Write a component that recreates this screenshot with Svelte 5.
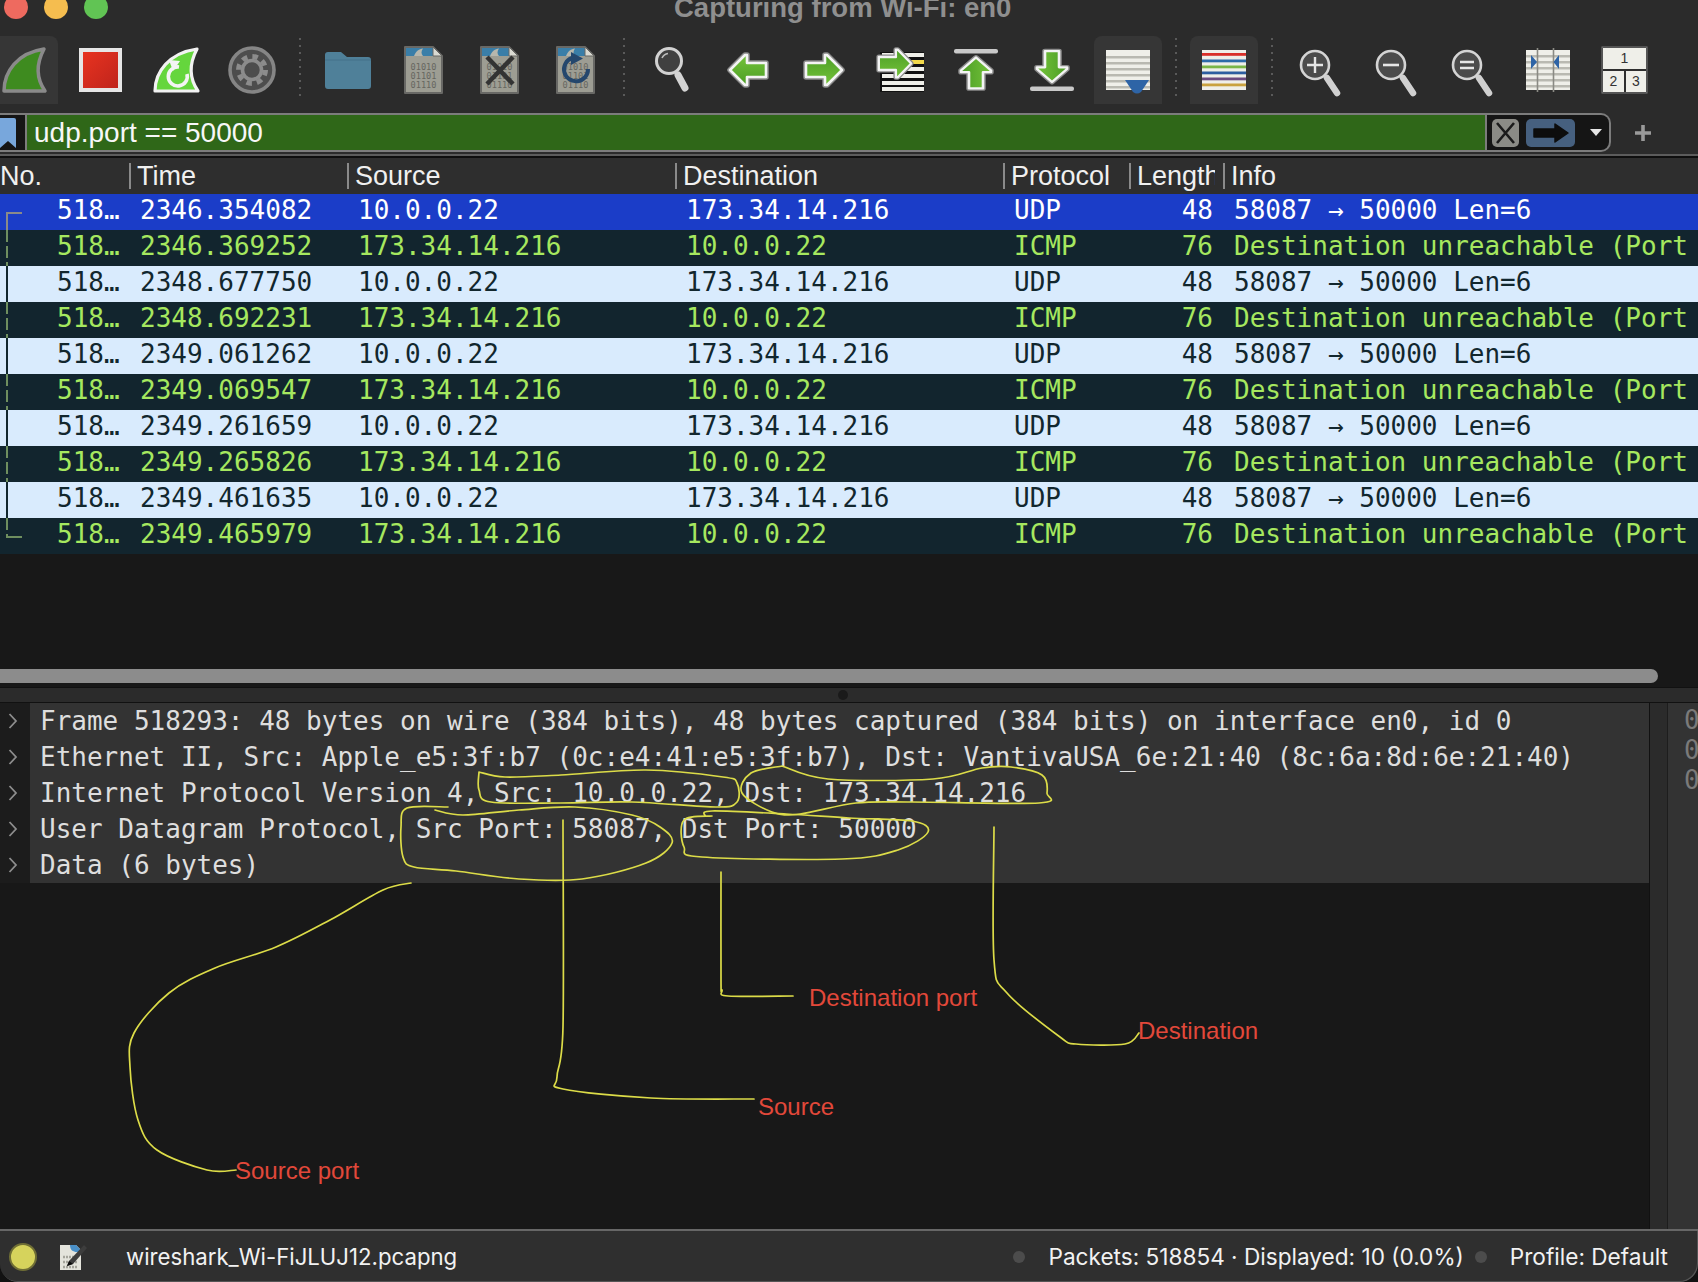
<script>
  const columns = ['No.', 'Time', 'Source', 'Destination', 'Protocol', 'Length', 'Info'];

  const times = ['2346.354082', '2346.369252', '2348.677750', '2348.692231', '2349.061262', '2349.069547', '2349.261659', '2349.265826', '2349.461635', '2349.465979'];

  const packets = times.map((time, i) => {
    const reply = i % 2 === 1;
    return {
      time,
      source: reply ? '173.34.14.216' : '10.0.0.22',
      destination: reply ? '10.0.0.22' : '173.34.14.216',
      protocol: reply ? 'ICMP' : 'UDP',
      length: reply ? 76 : 48,
      info: reply ? 'Destination unreachable (Port unreachable)' : '58087 → 50000 Len=6',
      kind: i === 0 ? 'selected' : reply ? 'dark' : 'plain',
      edge: i === 0 ? 'first' : i === times.length - 1 ? 'last' : ''
    };
  });

  const details = [
    'Frame 518293: 48 bytes on wire (384 bits), 48 bytes captured (384 bits) on interface en0, id 0',
    'Ethernet II, Src: Apple_e5:3f:b7 (0c:e4:41:e5:3f:b7), Dst: VantivaUSA_6e:21:40 (8c:6a:8d:6e:21:40)',
    'Internet Protocol Version 4, Src: 10.0.0.22, Dst: 173.34.14.216',
    'User Datagram Protocol, Src Port: 58087, Dst Port: 50000',
    'Data (6 bytes)'
  ];

  // hand-drawn marks, traced from the picture
  const scribbles = [
    [[479,772],[479,790],[491,802],[561,803],[632,802],[716,807],[737,802],[737,783],[723,777],[646,770],[561,775],[505,777],[479,772]],
    [[782,766],[751,773],[742,793],[772,812],[800,814],[856,803],[912,802],[1039,803],[1047,793],[1042,775],[1011,767],[982,768],[933,779],[828,779],[782,766]],
    [[448,807],[407,808],[401,827],[403,857],[414,867],[456,871],[519,879],[582,879],[646,863],[672,843],[660,827],[632,815],[575,807],[519,810],[463,815],[435,810]],
    [[705,816],[712,811],[786,814],[849,818],[912,821],[928,832],[898,850],[842,859],[702,857],[684,847],[684,820],[712,816]],
    [[563,820],[563,1027],[557,1077],[563,1089],[651,1098],[754,1099]],
    [[721,872],[721,980],[722,990],[728,996],[793,996]],
    [[994,827],[994,960],[1007,993],[1060,1037],[1076,1044],[1125,1044],[1139,1033]],
    [[411,883],[383,890],[330,920],[276,947],[215,968],[169,993],[134,1033],[130,1067],[138,1120],[157,1150],[207,1170],[236,1170]]
  ];

  const notes = [
    { text: 'Destination port', x: 809, y: 1006 },
    { text: 'Destination', x: 1138, y: 1039 },
    { text: 'Source', x: 758, y: 1115 },
    { text: 'Source port', x: 235, y: 1179 }
  ];

  function smooth(pts) {
    let d = `M${pts[0][0]} ${pts[0][1]}`;
    for (let i = 0; i < pts.length - 1; i++) {
      const p0 = pts[i - 1] || pts[i];
      const p1 = pts[i];
      const p2 = pts[i + 1];
      const p3 = pts[i + 2] || p2;
      const c1x = p1[0] + (p2[0] - p0[0]) / 6;
      const c1y = p1[1] + (p2[1] - p0[1]) / 6;
      const c2x = p2[0] - (p3[0] - p1[0]) / 6;
      const c2y = p2[1] - (p3[1] - p1[1]) / 6;
      d += `C${c1x} ${c1y} ${c2x} ${c2y} ${p2[0]} ${p2[1]}`;
    }
    return d;
  }
</script>

{#snippet arrow(transform)}
  <g {transform}>
    <path d="M-18 0L-3-15H-1V-7H18V7H-1V15H-3Z" fill="none" stroke="#8b8b8b" stroke-width="5.5" stroke-linejoin="round" />
    <path d="M-18 0L-3-15H-1V-7H18V7H-1V15H-3Z" fill="url(#green)" stroke="#f4f4f4" stroke-width="2.6" stroke-linejoin="round" />
  </g>
{/snippet}

{#snippet lens(sign)}
  <path d="M41 42L51 57" stroke="#d0d0d0" stroke-width="6.5" stroke-linecap="round" />
  <circle cx="29" cy="29" r="14" fill="#4b4b4b" stroke="#d4d4d4" stroke-width="2.6" />
  {#if sign === 'plus'}
    <path d="M21 29H37M29 21V37" stroke="#e6e6e6" stroke-width="2.4" />
  {:else if sign === 'minus'}
    <path d="M21 29H37" stroke="#e6e6e6" stroke-width="2.6" />
  {:else}
    <path d="M22 26H36M22 32H36" stroke="#e6e6e6" stroke-width="2.4" />
  {/if}
{/snippet}

{#snippet capture(extra)}
  <path d="M15 11H43L52 20V57H15Z" fill="#9d9d93" stroke="#686865" stroke-width="2" stroke-linejoin="round" />
  <path d="M16 12H43L47 20H16Z" fill="#3a7ea8" />
  <path d="M24 20C26 15 29 13 33 12.5C31 15 31 18 33 20Z" fill="#b7b7ad" />
  <path d="M43 11L52 20H43Z" fill="#dadad2" stroke="#686865" stroke-width="1" />
  <text class="bits" x="33.5" y="34">01010</text>
  <text class="bits" x="33.5" y="43">01101</text>
  <text class="bits" x="33.5" y="52">01110</text>
  {#if extra === 'close'}
    <path d="M21 21L47 48M47 21L21 48" stroke="#333" stroke-width="4.5" />
  {:else if extra === 'reload'}
    <path d="M46 33A12 12 0 1 1 30 22" fill="none" stroke="#25476d" stroke-width="4" />
    <path d="M29 16L41 22.5L29 29Z" fill="#25476d" />
  {/if}
{/snippet}

<div class="window">
  <svg class="defs" width="0" height="0" aria-hidden="true">
    <defs>
      <linearGradient id="green" x1="0" y1="0" x2="0" y2="1">
        <stop offset="0" stop-color="#74c23a" />
        <stop offset="1" stop-color="#4c9e25" />
      </linearGradient>
      <linearGradient id="red" x1="0" y1="0" x2="1" y2="1">
        <stop offset="0" stop-color="#ea3420" />
        <stop offset="1" stop-color="#bd231c" />
      </linearGradient>
    </defs>
  </svg>

  <header class="titlebar">
    <div class="lamps">
      <span class="lamp red"></span>
      <span class="lamp yellow"></span>
      <span class="lamp green"></span>
    </div>
    <div class="title">Capturing from Wi-Fi: en0</div>
  </header>

  <div class="toolbar">
    <div class="tool on">
      <svg viewBox="0 0 68 68"><path d="M14 55C14 36 27 17 54 13C46 28 46 42 55 55Z" fill="#3e8b1f" stroke="#8a8a8a" stroke-width="3.5" stroke-linejoin="round" /></svg>
    </div>
    <div class="tool">
      <svg viewBox="0 0 68 68"><rect x="15" y="14" width="39" height="40" fill="url(#red)" stroke="#e6e6e6" stroke-width="4" /></svg>
    </div>
    <div class="tool">
      <svg viewBox="0 0 68 68">
        <path d="M13 55C13 36 27 17 55 13C47 28 47 42 56 55Z" fill="#65d63d" stroke="#f2f2f2" stroke-width="3.2" stroke-linejoin="round" />
        <path d="M37 31A9.5 9.5 0 1 0 45 38" fill="none" stroke="#f4f4f4" stroke-width="3.6" />
        <path d="M27 24L38 25L31 35Z" fill="#f4f4f4" />
      </svg>
    </div>
    <div class="tool">
      <svg viewBox="0 0 68 68">
        <circle cx="34" cy="34" r="22" fill="#4d4d4d" stroke="#858585" stroke-width="3.6" />
        <circle cx="34" cy="34" r="13.5" fill="none" stroke="#8c8c8c" stroke-width="5" stroke-dasharray="5.5 5.1" />
        <circle cx="34" cy="34" r="9.5" fill="none" stroke="#8c8c8c" stroke-width="3.6" />
      </svg>
    </div>
    <span class="sep"></span>
    <div class="tool">
      <svg viewBox="0 0 68 68"><path d="M11 19Q11 16 14 16H27L33 21H54Q57 21 57 24V50Q57 53 54 53H14Q11 53 11 50Z" fill="#4f8099" /><path d="M11 24H57" stroke="#44718a" stroke-width="1" /></svg>
    </div>
    <div class="tool"><svg viewBox="0 0 68 68">{@render capture('')}</svg></div>
    <div class="tool"><svg viewBox="0 0 68 68">{@render capture('close')}</svg></div>
    <div class="tool"><svg viewBox="0 0 68 68">{@render capture('reload')}</svg></div>
    <span class="sep"></span>
    <div class="tool">
      <svg viewBox="0 0 68 68">
        <path d="M40 39L47 52" stroke="#d4d4d4" stroke-width="7" stroke-linecap="round" />
        <circle cx="31" cy="25" r="12.5" fill="#404040" stroke="#d2d2d2" stroke-width="3" />
        <path d="M24 22Q26 18 30 17.5" fill="none" stroke="#bdbdbd" stroke-width="1.6" />
      </svg>
    </div>
    <div class="tool"><svg viewBox="0 0 68 68">{@render arrow('translate(34 34)')}</svg></div>
    <div class="tool"><svg viewBox="0 0 68 68">{@render arrow('translate(34 34) rotate(180)')}</svg></div>
    <div class="tool">
      <svg viewBox="0 0 68 68">
        <rect x="14" y="16" width="44" height="40" fill="#111" />
        {#each [17, 24, 31, 38, 45, 51] as y}
          <rect x="16" {y} width="42" height="4" fill={y === 24 ? '#f2d94a' : '#efefe9'} />
        {/each}
        {@render arrow('translate(29 27.5) rotate(180) scale(.9 .92)')}
      </svg>
    </div>
    <div class="tool">
      <svg viewBox="0 0 68 68">
        <rect x="12" y="13" width="44" height="4.5" rx="2" fill="#c9c9c9" />
        {@render arrow('translate(34 37) rotate(90) scale(.86 1)')}
      </svg>
    </div>
    <div class="tool">
      <svg viewBox="0 0 68 68">
        {@render arrow('translate(34 30.5) rotate(-90) scale(.86 1)')}
        <rect x="12" y="50.5" width="44" height="4.5" rx="2" fill="#c9c9c9" />
      </svg>
    </div>
    <div class="tool on">
      <svg viewBox="0 0 68 68">
        <rect x="12" y="14" width="44" height="40" fill="#efefe9" />
        {#each [20, 26, 32, 38, 44, 50] as y}
          <rect x="12" {y} width="44" height="2.5" fill="#b9b9b1" />
        {/each}
        <path d="M31 44H55L47 56Q43 59 39 56Z" fill="#2e64a6" />
      </svg>
    </div>
    <span class="sep"></span>
    <div class="tool on">
      <svg viewBox="0 0 68 68">
        <rect x="12" y="14" width="44" height="40" fill="#efefe9" />
        {#each [['#d9302a', 17], ['#2d6ba8', 23.5], ['#7ab648', 29.5], ['#2d5ea0', 35.5], ['#6b4a80', 41.5], ['#c9a23f', 47.5]] as [c, y]}
          <rect x="12" {y} width="44" height="2.8" fill={c} />
        {/each}
      </svg>
    </div>
    <span class="sep"></span>
    <div class="tool"><svg viewBox="0 0 68 68">{@render lens('plus')}</svg></div>
    <div class="tool"><svg viewBox="0 0 68 68">{@render lens('minus')}</svg></div>
    <div class="tool"><svg viewBox="0 0 68 68">{@render lens('equal')}</svg></div>
    <div class="tool">
      <svg viewBox="0 0 68 68">
        <rect x="12" y="14" width="44" height="40" fill="#efefe9" />
        {#each [19, 25, 31, 37, 43, 49] as y}
          <rect x="12" {y} width="44" height="2.5" fill="#b9b9b1" />
        {/each}
        <path d="M23.5 12V56M39.5 12V56" stroke="#8a8a84" stroke-width="1.6" />
        <path d="M17 19L23 26L17 33ZM45 19L39.5 26L45 33Z" fill="#2e64a6" />
      </svg>
    </div>
    <div class="tool">
      <svg viewBox="0 0 68 68">
        <rect x="12" y="11" width="45" height="46" fill="#2f2f2f" stroke="#7c7c7c" stroke-width="1" />
        <rect x="13" y="12" width="43" height="21" fill="#efefe9" />
        <rect x="13" y="35" width="21" height="21" fill="#efefe9" />
        <rect x="36" y="35" width="20" height="21" fill="#efefe9" />
        <text class="pane" x="34.5" y="27">1</text>
        <text class="pane" x="23.5" y="50">2</text>
        <text class="pane" x="46" y="50">3</text>
      </svg>
    </div>
  </div>

  <div class="filter-row">
    <div class="filter">
      <div class="bookmark">
        <svg viewBox="0 0 16 30" width="16" height="30"><path d="M0 0H14Q16 0 16 2V30L8 23L0 30Z" fill="#78a7dc" /></svg>
      </div>
      <div class="filter-text">udp.port == 50000</div>
      <div class="filter-actions">
        <span class="clear">
          <svg viewBox="0 0 27 28" width="27" height="28"><path d="M5 4L22 24M22 4L5 24" stroke="#1b1b1b" stroke-width="2.6" /></svg>
        </span>
        <span class="apply">
          <svg viewBox="0 0 49 28" width="49" height="28"><path d="M8 10H29V5L42 14L29 23V18H8Z" fill="#0d0d0d" stroke="#0d0d0d" stroke-width="1.5" stroke-linejoin="round" /></svg>
        </span>
        <span class="caret"></span>
      </div>
    </div>
    <span class="plus">
      <svg viewBox="0 0 16 16" width="16" height="16"><path d="M8 0V16M0 8H16" stroke="#9a9a9a" stroke-width="3.6" /></svg>
    </span>
  </div>

  <div class="packets">
    <div class="head cols">
      {#each columns as name}
        <div class="head-cell"><span>{name}</span></div>
      {/each}
    </div>
    {#each packets as p}
      <div class="row cols {p.kind}">
        <div class="cell num">
          <span class="rel {p.edge}"></span>
          518…
        </div>
        <div class="cell">{p.time}</div>
        <div class="cell">{p.source}</div>
        <div class="cell">{p.destination}</div>
        <div class="cell">{p.protocol}</div>
        <div class="cell len">{p.length}</div>
        <div class="cell">{p.info}</div>
      </div>
    {/each}
    <div class="blank"></div>
    <div class="hscroll"><span class="thumb"></span></div>
  </div>

  <div class="splitter"><span class="grip"></span></div>

  <div class="lower">
    <div class="tree">
      {#each details as line}
        <div class="tree-row">
          <span class="gutter">
            <svg viewBox="0 0 10 18" width="10" height="18"><path d="M1.5 2L8 9L1.5 16" fill="none" stroke="#8d8d8d" stroke-width="1.8" /></svg>
          </span>
          <span class="tree-text">{line}</span>
        </div>
      {/each}
    </div>
    <div class="hex">
      <div>0</div>
      <div>0</div>
      <div>0</div>
    </div>
  </div>

  <footer class="status">
    <span class="expert"></span>
    <svg class="note" viewBox="0 0 28 28" width="28" height="28">
      <path d="M1 2H17L22 7V27H1Z" fill="#e4e4dc" />
      <path d="M1 2H11C11 7 14 9 18 9H22V7L17 2Z" fill="#4a90c8" />
      <path d="M4 14H18M4 19H18M4 24H18" stroke="#a5a59c" stroke-width="2.4" stroke-dasharray="2 1" />
      <path d="M25 2L10 18L8 23L14 21L28 5Z" fill="#3d3d3d" />
      <path d="M10 18L8 23L14 21Z" fill="#0c0c0c" />
    </svg>
    <span class="file">wireshark_Wi-FiJLUJ12.pcapng</span>
    <span class="dot first"></span>
    <span class="counts">Packets: 518854 · Displayed: 10 (0.0%)</span>
    <span class="dot"></span>
    <span class="profile">Profile: Default</span>
  </footer>

  <svg class="ink" viewBox="0 0 1698 1282" width="1698" height="1282">
    {#each scribbles as pts}
      <path d={smooth(pts)} />
    {/each}
    {#each notes as n}
      <text x={n.x} y={n.y}>{n.text}</text>
    {/each}
  </svg>
</div>

<style>
  :global(body) {
    margin: 0;
    background: #121212;
  }

  .window {
    position: relative;
    width: 1698px;
    height: 1282px;
    overflow: hidden;
    display: flex;
    flex-direction: column;
    background: #2b2b2b;
    border-radius: 0 0 18px 18px;
    font-family: "Liberation Sans", Arial, sans-serif;
    color: #f0f0f0;
  }

  .defs {
    position: absolute;
  }

  .titlebar {
    height: 36px;
    flex: none;
    display: flex;
    align-items: flex-start;
  }

  .lamps {
    display: flex;
    gap: 16px;
    margin: -5px 0 0 4px;
  }

  .lamp {
    width: 24px;
    height: 24px;
    border-radius: 50%;
  }

  .red { background: #ee6a5f; }
  .yellow { background: #f5bd4f; }
  .green { background: #61c454; }

  .title {
    margin: -7px 0 0 566px;
    font-size: 27.5px;
    line-height: 30px;
    font-weight: 700;
    color: #8f8f8f;
    white-space: nowrap;
  }

  .toolbar {
    height: 68px;
    flex: none;
    margin: 0 0 9px -10px;
    display: flex;
    gap: 8px;
  }

  .tool {
    width: 68px;
    height: 68px;
    flex: none;
    border-radius: 8px 8px 0 0;
  }

  .tool.on {
    background: #363636;
  }

  .tool svg {
    display: block;
    width: 68px;
    height: 68px;
  }

  .sep {
    width: 12px;
    height: 62px;
    margin-top: 2px;
    flex: none;
    background: repeating-linear-gradient(#5a5a5a 0 2px, transparent 2px 7px) center / 2px 100% no-repeat;
  }

  .bits {
    font: 8.6px "DejaVu Sans Mono", monospace;
    fill: #66665f;
    text-anchor: middle;
  }

  .pane {
    font: 14px "Liberation Sans", sans-serif;
    fill: #333;
    text-anchor: middle;
  }

  .filter-row {
    height: 39px;
    flex: none;
    display: flex;
    align-items: center;
  }

  .filter {
    width: 1611px;
    height: 39px;
    box-sizing: border-box;
    display: flex;
    border: solid #7c7c7c;
    border-width: 2px 2px 2px 0;
    border-radius: 0 10px 10px 0;
    background: #151515;
    overflow: hidden;
  }

  .bookmark {
    width: 27px;
    flex: none;
    padding-top: 3px;
    border-right: 2px solid #7c7c7c;
    box-sizing: border-box;
  }

  .bookmark svg {
    display: block;
  }

  .filter-text {
    flex: 1;
    background: #2f6718;
    padding-left: 7px;
    font-size: 28px;
    line-height: 35px;
    color: #f7f7f7;
  }

  .filter-actions {
    width: 124px;
    flex: none;
    box-sizing: border-box;
    display: flex;
    align-items: center;
    padding-left: 5px;
    border-left: 2px solid #7c7c7c;
  }

  .clear,
  .apply {
    display: block;
    height: 28px;
    border-radius: 5px;
  }

  .clear {
    width: 27px;
    background: #8b8b86;
  }

  .apply {
    width: 49px;
    margin-left: 7px;
    background: #46607f;
  }

  .clear svg,
  .apply svg {
    display: block;
  }

  .caret {
    margin: 0 0 0 15px;
    border: solid transparent;
    border-width: 7px 6.5px 0;
    border-top-color: #e6e6e6;
  }

  .plus {
    margin-left: 24px;
    display: block;
    height: 16px;
  }

  .plus svg {
    display: block;
  }

  .packets {
    margin-top: 4px;
    height: 531px;
    flex: none;
    display: flex;
    flex-direction: column;
    border-top: 2px solid #0f0f0f;
    box-sizing: border-box;
    background: #181818;
    box-shadow: 0 -2px 0 #5c5c5c;
  }

  .cols {
    display: grid;
    grid-template-columns: 129px 218px 328px 328px 126px 94px 475px;
    flex: none;
  }

  .head {
    height: 36px;
    background: #2e2e2e;
    font-size: 27px;
  }

  .head-cell {
    position: relative;
    padding: 0 8px;
    line-height: 37px;
    min-width: 0;
  }

  .head-cell span {
    display: block;
    overflow: hidden;
    white-space: nowrap;
  }

  .head-cell::before {
    content: '';
    position: absolute;
    left: 0;
    top: 5px;
    bottom: 6px;
    width: 2px;
    background: #8a8a8a;
  }

  .head-cell:first-child {
    padding-left: 0;
  }

  .head-cell:first-child::before {
    display: none;
  }

  .row {
    height: 36px;
    font: 26px/32px "DejaVu Sans Mono", Menlo, monospace;
  }

  .selected { background: #1b3dc8; color: #fff; }
  .dark { background: #12252e; color: #a6e85f; }
  .plain { background: #d9ebfd; color: #12272e; }

  .cell {
    position: relative;
    height: 36px;
    padding-left: 11px;
    white-space: nowrap;
    overflow: hidden;
    min-width: 0;
  }

  .num {
    padding-left: 57px;
  }

  .len {
    padding: 0 10px 0 0;
    text-align: right;
  }

  .rel {
    position: absolute;
    left: 6px;
    width: 2px;
    top: 0;
    bottom: 0;
    background: #12272e;
  }

  .dark .rel {
    background: repeating-linear-gradient(#6f8f5f 0 12px, transparent 12px 16px);
  }

  .rel.first {
    top: 18px;
    background: #8a8a8a;
  }

  .rel.first::after,
  .rel.last::after {
    content: '';
    position: absolute;
    left: 0;
    width: 16px;
    height: 2px;
    background: #6f8f5f;
  }

  .rel.first::after {
    top: 0;
    background: #8a8a8a;
  }

  .rel.last {
    bottom: 16px;
  }

  .rel.last::after {
    bottom: 0;
  }

  .blank {
    flex: 1;
  }

  .hscroll {
    height: 14px;
    margin-bottom: 4px;
    flex: none;
  }

  .thumb {
    display: block;
    width: 1658px;
    height: 14px;
    background: #8c8c8c;
    border-radius: 0 7px 7px 0;
  }

  .splitter {
    height: 15px;
    flex: none;
    display: flex;
    justify-content: center;
    align-items: center;
    background: #2b2b2b;
    border-top: 1px solid #111;
    box-sizing: border-box;
    padding-right: 12px;
  }

  .grip {
    width: 10px;
    height: 10px;
    border-radius: 50%;
    background: #1a1a1a;
  }

  .lower {
    flex: 1;
    min-height: 0;
    display: flex;
    border-top: 1px solid #111;
  }

  .tree {
    width: 1650px;
    flex: none;
    box-sizing: border-box;
    background: #181818;
    border-right: 1px solid #111;
    overflow: hidden;
  }

  .tree-row {
    height: 36px;
    display: flex;
    background: #333;
    font: 26px/36px "DejaVu Sans Mono", Menlo, monospace;
    color: #dedede;
    white-space: nowrap;
  }

  .gutter {
    width: 30px;
    flex: none;
    display: flex;
    align-items: center;
    padding-left: 8px;
    box-sizing: border-box;
    background: #1c1c1c;
  }

  .tree-text {
    padding-left: 10px;
  }

  .hex {
    width: 31px;
    margin-left: 17px;
    flex: none;
    box-sizing: border-box;
    padding: 2px 0 0 16px;
    background: #333;
    border-left: 1px solid #1d1d1d;
    overflow: hidden;
    font: 26px/30px "DejaVu Sans Mono", Menlo, monospace;
    color: #7a7a7a;
  }

  .status {
    height: 53px;
    flex: none;
    box-sizing: border-box;
    display: flex;
    align-items: center;
    border-top: 2px solid #676767;
    background: #2f2f2f;
    box-shadow: inset -1px -1px 0 #555;
    border-radius: 0 0 18px 18px;
    font-family: Inter, "Liberation Sans", sans-serif;
    font-size: 22.6px;
    line-height: 30px;
    padding-top: 1px;
    color: #f2f2f2;
    white-space: nowrap;
  }

  .expert {
    width: 24px;
    height: 24px;
    margin-left: 9px;
    border-radius: 50%;
    background: #d6d35c;
    border: 2px solid #6f6e35;
  }

  .note {
    margin-left: 22px;
  }

  .file {
    margin-left: 39px;
    font-size: 22.2px;
  }

  .dot {
    width: 12px;
    height: 12px;
    border-radius: 50%;
    background: #4c4c4c;
    margin: 0 23px 0 11px;
  }

  .dot.first {
    margin-left: auto;
    margin-right: 24px;
  }

  .profile {
    margin-right: 30px;
  }

  .ink {
    position: absolute;
    inset: 0;
    pointer-events: none;
  }

  .ink path {
    fill: none;
    stroke: #dcdc48;
    stroke-width: 1.7;
    stroke-linecap: round;
  }

  .ink text {
    font: 24px "Liberation Sans", Arial, sans-serif;
    fill: #e2483a;
  }
</style>
